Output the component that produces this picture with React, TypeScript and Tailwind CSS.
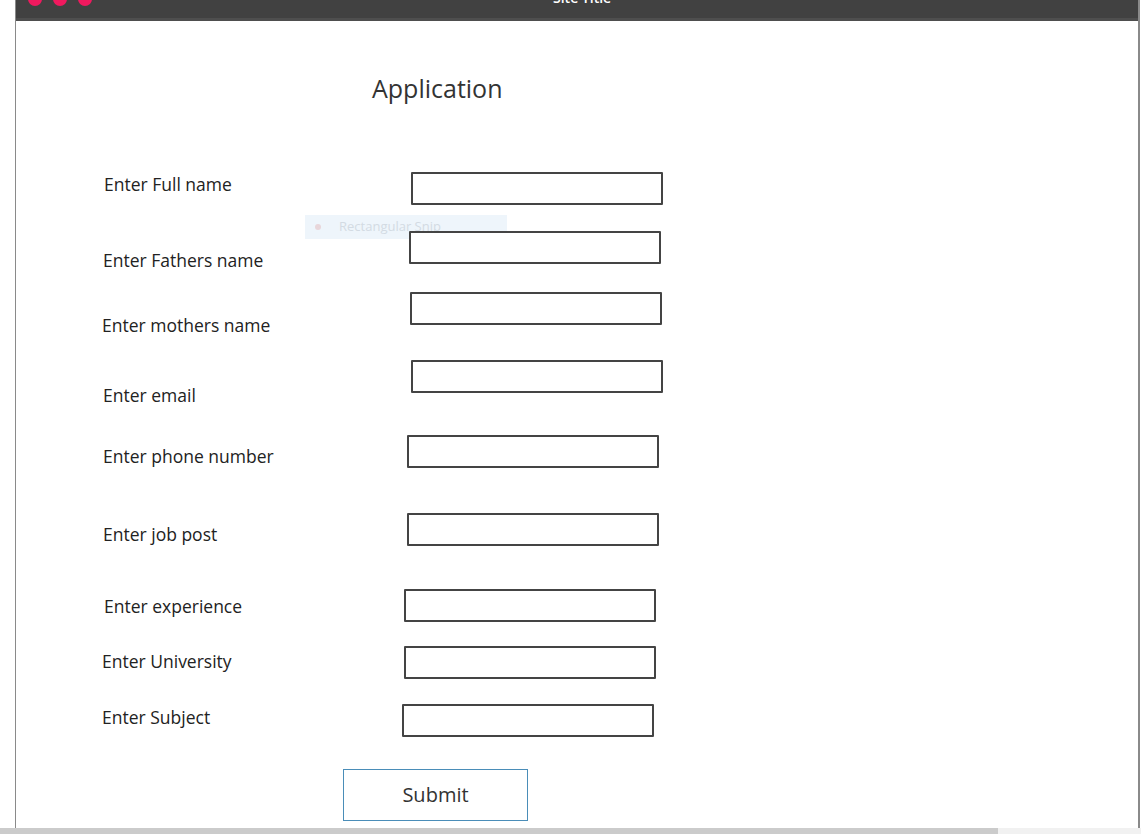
import { useState } from 'react';

interface Field {
  label: string;
  rowClass: string;
  labelClass: string;
  boxClass: string;
}

const fields: Field[] = [
  { label: 'Enter Full name', rowClass: 'mt-[66px]', labelClass: 'pl-[2px] pt-0', boxClass: 'ml-[9px]' },
  { label: 'Enter Fathers name', rowClass: 'mt-[26px]', labelClass: 'pl-[1px] pt-[17px]', boxClass: 'ml-[7px]' },
  { label: 'Enter mothers name', rowClass: 'mt-[28px]', labelClass: 'pl-0 pt-[21px]', boxClass: 'ml-[8px]' },
  { label: 'Enter email', rowClass: 'mt-[35px]', labelClass: 'pl-[1px] pt-[23px]', boxClass: 'ml-[9px]' },
  { label: 'Enter phone number', rowClass: 'mt-[42px]', labelClass: 'pl-[1px] pt-[9px]', boxClass: 'ml-[5px]' },
  { label: 'Enter job post', rowClass: 'mt-[45px]', labelClass: 'pl-[1px] pt-[9px]', boxClass: 'ml-[5px]' },
  { label: 'Enter experience', rowClass: 'mt-[43px]', labelClass: 'pl-[2px] pt-[5px]', boxClass: 'ml-[2px]' },
  { label: 'Enter University', rowClass: 'mt-[24px]', labelClass: 'pl-0 pt-[3px]', boxClass: 'ml-[2px]' },
  { label: 'Enter Subject', rowClass: 'mt-[25px]', labelClass: 'pl-0 pt-[1px]', boxClass: 'ml-0' },
];

export default function App() {
  const [values, setValues] = useState<string[]>(fields.map(() => ''));

  const update = (index: number, value: string) => {
    const next = [...values];
    next[index] = value;
    setValues(next);
  };

  return (
    <div className="relative h-[834px] w-[1141px] overflow-hidden bg-white font-['Open_Sans','Noto_Sans',sans-serif] text-[#333]">
      <div className="relative ml-[15px] mr-[1px] h-[828px] border-x-2 border-l border-[#8a8a8a]">
        {/* title bar */}
        <div className="relative h-[21px] border-b-[3px] border-[#4e4e4e] bg-[#414141]">
          <div className="absolute left-[12px] top-[-8px] flex gap-[11px]">
            <span className="h-[14px] w-[14px] rounded-full bg-[#f0195e]" />
            <span className="h-[14px] w-[14px] rounded-full bg-[#f0195e]" />
            <span className="h-[14px] w-[14px] rounded-full bg-[#f0195e]" />
          </div>
          <div className="absolute left-[537px] top-[-9px] text-[14px] font-semibold leading-[14px] text-white">Site Title</div>
        </div>

        <h1 className="ml-[356px] mt-[50px] text-[25px] font-normal leading-[35px] text-[#333]">Application</h1>

        {/* leftover snipping tool tooltip */}
        <div className="absolute left-[289px] top-[215px] flex h-[24px] w-[202px] items-center bg-[#eef5fb] text-[13px] text-[#d3dbe3]">
          <span className="ml-[10px] h-[6px] w-[6px] rounded-full bg-[#e8d6da]" />
          <span className="ml-[18px]">Rectangular Snip</span>
        </div>

        {fields.map((f, i) => (
          <div key={f.label} className={`relative flex h-[33px] items-start pl-[86px] ${f.rowClass}`}>
            <label className={`w-[300px] shrink-0 text-[17.5px] leading-[24px] text-[#222] ${f.labelClass}`}>{f.label}</label>
            <input
              className={`h-[33px] w-[252px] shrink-0 rounded-[1px] border-2 border-[#444] bg-white px-2 text-[15px] outline-none ${f.boxClass}`}
              value={values[i]}
              onChange={(e) => update(i, e.target.value)}
            />
          </div>
        ))}

        <button
          type="button"
          className="ml-[327px] mt-[32px] flex h-[52px] w-[185px] items-center justify-center border border-[#4a8db8] bg-white text-[20px] text-[#333]"
        >
          Submit
        </button>
      </div>

      {/* horizontal scrollbar */}
      <div className="flex h-[6px]">
        <div className="w-[998px] bg-[#cbcbcb]" />
        <div className="flex-1 bg-[#f1f1f1]" />
      </div>
    </div>
  );
}
